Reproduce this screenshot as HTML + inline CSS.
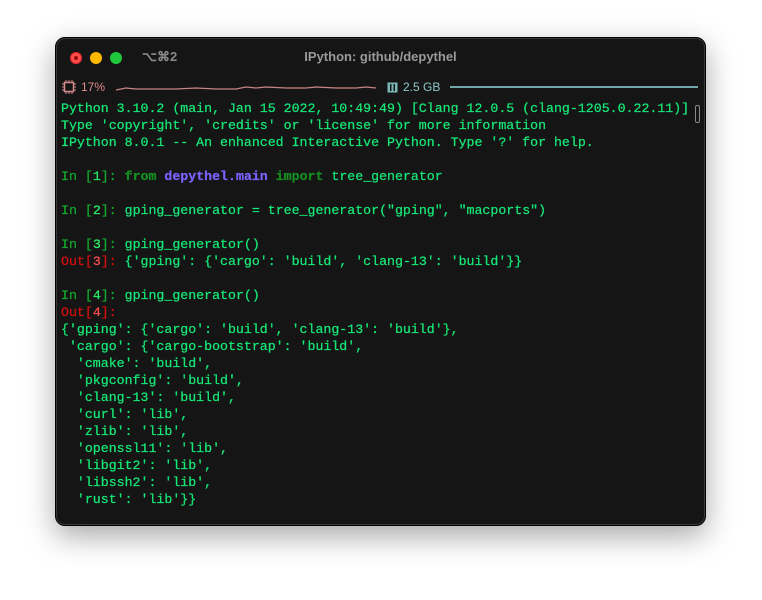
<!DOCTYPE html>
<html><head><meta charset="utf-8">
<style>
html,body{margin:0;padding:0;width:762px;height:600px;background:#fff;overflow:hidden}
.win{position:absolute;left:55px;top:37px;width:651px;height:489px;background:#151515;border-radius:10px;box-shadow:0 10px 30px rgba(0,0,0,.35),0 0 0 1px #3a3a3a inset;border:1px solid #000;box-sizing:border-box}
.dot{position:absolute;top:14px;width:12px;height:12px;border-radius:50%}
.title{position:absolute;top:11px;left:0;width:100%;text-align:center;font:bold 13px "Liberation Sans",sans-serif;color:#9a9a9a}
.kb{position:absolute;top:11px;left:86px;font:bold 13px "Liberation Sans",sans-serif;color:#8a8a8a}
.term{position:absolute;left:5px;top:62px;font:13.25px/17px "Liberation Mono",monospace;color:#16e877;white-space:pre;-webkit-text-stroke:0.25px currentColor}
.dg{color:#14a82c}.bg{color:#2bf06a}.kw{color:#15901f;font-weight:bold}.pu{color:#7a63ff;font-weight:bold}
.rd{color:#d40f0f}.br{color:#ff4e4e}
.stat{position:absolute;top:42px;font:12px "Liberation Sans",sans-serif}
</style></head><body>
<div class="win">
<div class="dot" style="left:14px;background:#fe4f4a;box-shadow:inset 0 0 0 1px #d23;"><div style="position:absolute;left:4px;top:4px;width:4px;height:4px;border-radius:50%;background:#9a0b0b"></div></div>
<div class="dot" style="left:34px;background:#ffb900"></div>
<div class="dot" style="left:54px;background:#1fc83a"></div>
<div class="kb">⌥⌘2</div>
<div class="title">IPython: github/depythel</div>
<svg style="position:absolute;left:6px;top:42px" width="14" height="14" viewBox="0 0 14 14"><rect x="2.5" y="2.5" width="9" height="9" fill="none" stroke="#d78a8a" stroke-width="1.5"/><path d="M4 0v2M7 0v2M10 0v2M4 12v2M7 12v2M10 12v2M0 4h2M0 7h2M0 10h2M12 4h2M12 7h2M12 10h2" stroke="#d78a8a"/></svg>
<div class="stat" style="left:25px;color:#e08c8c">17%</div>
<svg style="position:absolute;left:60px;top:43px" width="260" height="12"><path d="M0 9 L10 7 L20 8 L40 8 L60 8 L80 7 L100 8 L120 8 L130 6 L140 7 L150 6 L170 7 L190 7 L200 6 L220 7 L240 7 L250 6 L260 7" fill="none" stroke="#c88585" stroke-width="1.3"/></svg>
<svg style="position:absolute;left:331px;top:44px" width="11" height="11"><rect x="0.5" y="0.5" width="10" height="10" fill="#7ab8b8"/><rect x="3" y="2" width="5" height="7" fill="#151515"/><rect x="4.5" y="2" width="2" height="7" fill="#7ab8b8"/></svg>
<div class="stat" style="left:347px;color:#8ec8c8">2.5 GB</div>
<div style="position:absolute;left:394px;top:48px;width:248px;height:1.5px;background:#6fa8a8"></div>
<div style="position:absolute;left:639px;top:67px;width:3px;height:16px;border:1px solid #888;border-radius:2px"></div>
<div class="term">Python 3.10.2 (main, Jan 15 2022, 10:49:49) [Clang 12.0.5 (clang-1205.0.22.11)]
Type 'copyright', 'credits' or 'license' for more information
IPython 8.0.1 -- An enhanced Interactive Python. Type '?' for help.

<span class="dg">In [</span><span class="bg">1</span><span class="dg">]: </span><span class="kw">from</span> <span class="pu">depythel.main</span> <span class="kw">import</span> tree_generator

<span class="dg">In [</span><span class="bg">2</span><span class="dg">]: </span>gping_generator = tree_generator("gping", "macports")

<span class="dg">In [</span><span class="bg">3</span><span class="dg">]: </span>gping_generator()
<span class="rd">Out[</span><span class="br">3</span><span class="rd">]: </span>{'gping': {'cargo': 'build', 'clang-13': 'build'}}

<span class="dg">In [</span><span class="bg">4</span><span class="dg">]: </span>gping_generator()
<span class="rd">Out[</span><span class="br">4</span><span class="rd">]:</span>
{'gping': {'cargo': 'build', 'clang-13': 'build'},
 'cargo': {'cargo-bootstrap': 'build',
  'cmake': 'build',
  'pkgconfig': 'build',
  'clang-13': 'build',
  'curl': 'lib',
  'zlib': 'lib',
  'openssl11': 'lib',
  'libgit2': 'lib',
  'libssh2': 'lib',
  'rust': 'lib'}}</div>
</div>
</body></html>
